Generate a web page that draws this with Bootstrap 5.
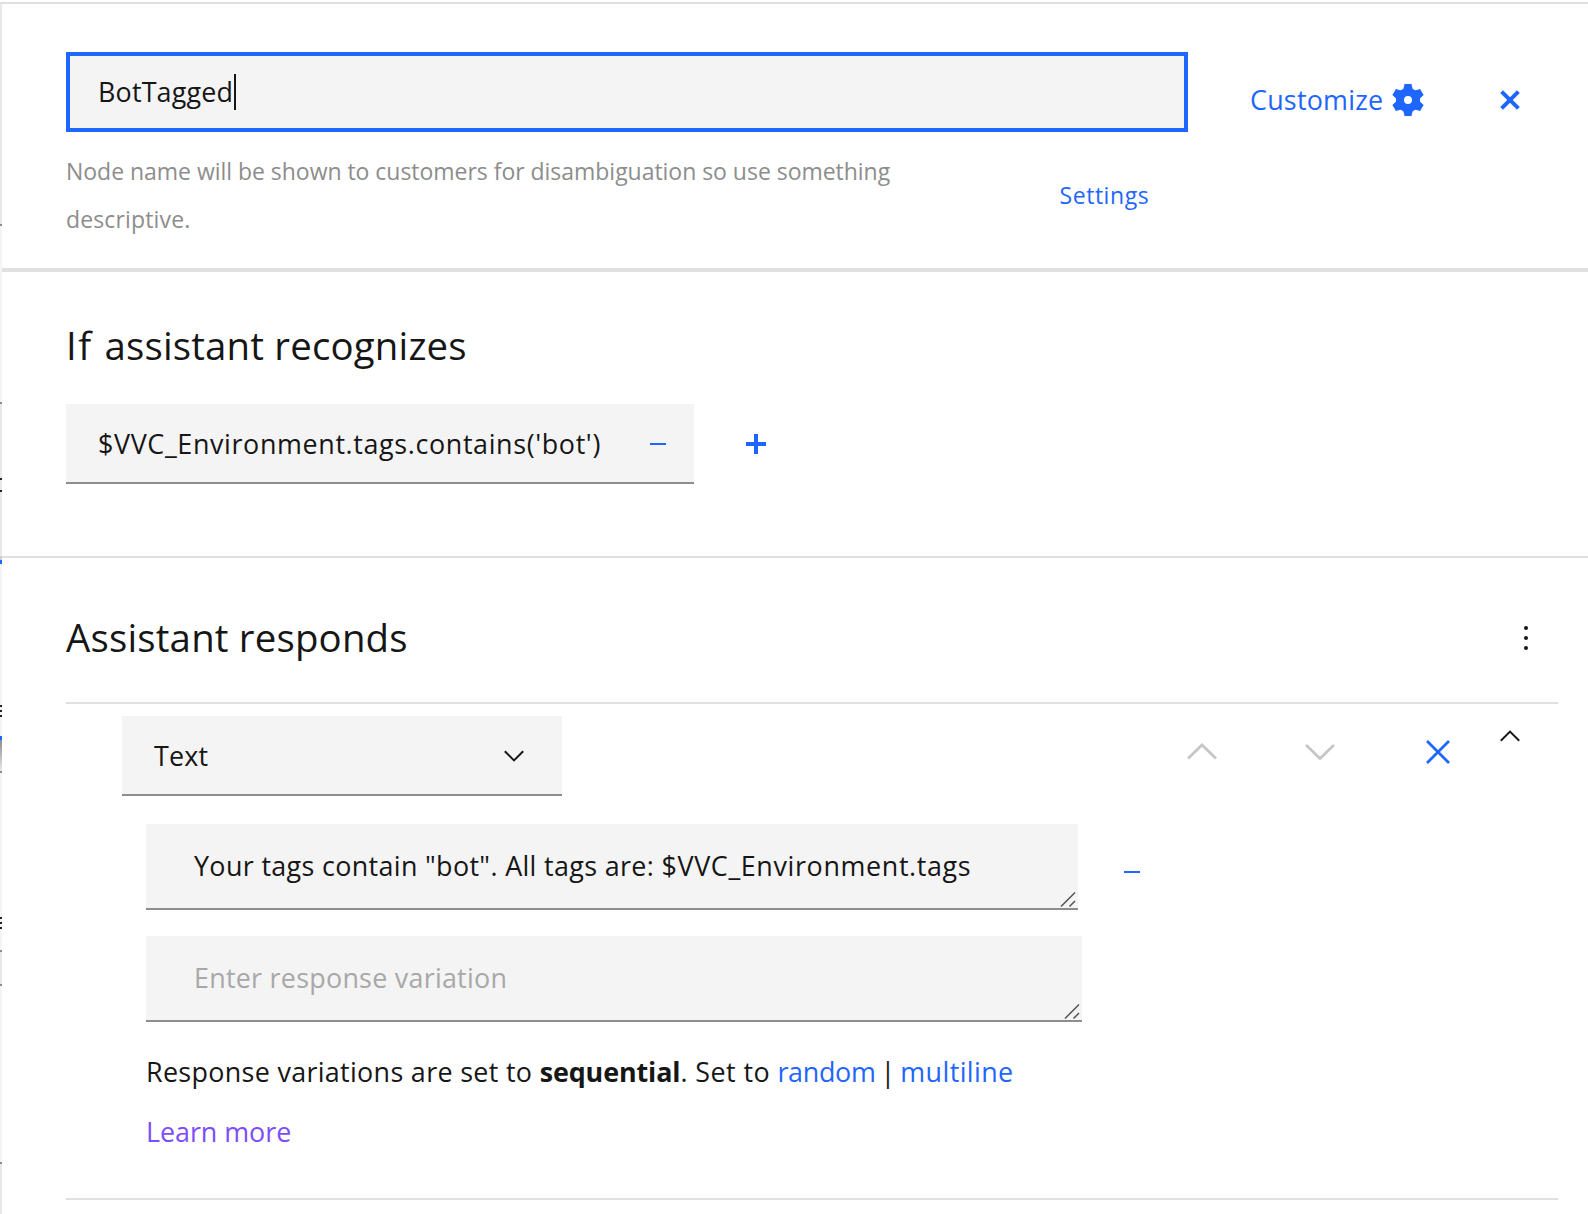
<!DOCTYPE html>
<html lang="en">
<head>
<meta charset="utf-8">
<meta name="viewport" content="width=device-width, initial-scale=1">
<title>Dialog node editor</title>
<link href="https://cdn.jsdelivr.net/npm/bootstrap@5.3.0/dist/css/bootstrap.min.css" rel="stylesheet">
<script src="https://cdn.jsdelivr.net/npm/bootstrap@5.3.0/dist/js/bootstrap.bundle.min.js" defer></script>
<style>
  body { font-family: "Open Sans", "Noto Sans", sans-serif; color: #161616; font-size: 26.9px; background: #fff; height: 1214px; overflow: hidden; }
  a { text-decoration: none; color: #1f66ff; }
  svg { display: block; flex: none; overflow: visible; }
  .editor { height: 1214px; padding-top: 2px; }
  .editor-body { border-top: 2px solid #e0e0e0; }
  /* sliver of the dialog tree behind the panel */
  .tree-edge { width: 2px; flex: none; position: relative; overflow: hidden;
    background: linear-gradient(#e8e8e8 220px, #8d8d8d 220px 222px, #f4f4f4 222px 398px, #8d8d8d 398px 400px,
      #e8e8e8 400px 552px, #d0d0d0 552px 556px, #1f66ff 556px 560px, #f4f4f4 560px 732px, #1f66ff 732px 736px,
      #8d8d8d 736px, #e8e8e8 767px, #8d8d8d 767px 769px, #f4f4f4 769px 946px, #8d8d8d 946px 948px,
      #e8e8e8 948px 980px, #8d8d8d 980px 982px, #f4f4f4 982px 1158px, #8d8d8d 1158px 1160px, #e8e8e8 1160px); }
  .tree-edge i { position: absolute; left: 0; width: 2px; height: 2px; background: #222; }
  .edge-1 { top: 474px; } .edge-2 { top: 486px; }
  .edge-3 { top: 701px; } .edge-4 { top: 706px; } .edge-5 { top: 711px; }
  .edge-6 { top: 913px; } .edge-7 { top: 918px; } .edge-8 { top: 923px; }
  .sec-head { height: 268px; border-bottom: 4px solid #e0e0e0; padding: 48px 0 0 64px; }
  .name-col { width: 1122px; flex: none; }
  .name-box { height: 80px; border: 4px solid #1f66ff; background: #f4f4f4; padding-left: 28px; letter-spacing: .17px; }
  .caret { width: 2px; height: 36px; background: #161616; margin-left: 1px; }
  .help-row { margin-top: 15px; font-size: 23px; line-height: 48px; }
  .help-copy { width: 880px; color: #8d8d8d; letter-spacing: -.03px; }
  .help-tail { letter-spacing: .14px; }
  .link-settings { margin-left: 113.5px; letter-spacing: .55px; }
  .head-tools { height: 96px; padding-left: 62px; }
  .link-custom { letter-spacing: .22px; }
  .icon-close { margin-left: 75px; }
  .h-title { font-size: 38.4px; line-height: 52px; font-weight: 400; margin: 0; letter-spacing: .18px; }
  .h-first { letter-spacing: 1.6px; }
  .sec-if { height: 286px; border-bottom: 2px solid #e0e0e0; padding: 47px 0 0 64px; }
  .field-box { background: #f4f4f4; border-bottom: 2px solid #8d8d8d; white-space: nowrap; }
  .cond { width: 628px; height: 80px; margin-top: 33px; padding: 2px 28px 0 32px; letter-spacing: .63px; }
  .icon-plus { margin: 63px 0 0 52px; }
  .sec-resp { padding: 53px 30px 0 64px; }
  .resp-top { padding-right: 28px; height: 93px; border-bottom: 2px solid #e0e0e0; }
  .icon-dots { margin-top: 15px; }
  .resp-body { height: 496px; border-bottom: 2px solid #e0e0e0; padding: 12px 38px 0 56px; }
  .type-select { width: 440px; height: 80px; padding: 2px 37px 0 32px; letter-spacing: .2px; }
  .row-tools { padding-top: 14px; }
  .icon-up { margin-top: 13px; }
  .icon-down { margin: 14px 0 0 88px; }
  .icon-remove { margin: 10px 0 0 91px; }
  .icon-fold { margin-left: 50px; }
  .variants { padding: 28px 0 0 24px; }
  .area { width: 932px; height: 86px; padding-left: 48px; position: relative; letter-spacing: .34px; }
  .area-var { letter-spacing: .63px; }
  .area-next { width: 936px; margin-top: 26px; color: #a8a8a8; letter-spacing: .25px; }
  .icon-minus { margin: 10px 0 0 46px; }
  .grip { position: absolute; right: 1px; bottom: .5px; }
  .resp-note { margin-top: 20px; line-height: 60px; white-space: nowrap; letter-spacing: .32px; }
  .note-mode { letter-spacing: -.1px; }
  .note-set { letter-spacing: .45px; }
  .note-modes { word-spacing: -2px; letter-spacing: 0; }
  .note-random { letter-spacing: -.3px; }
  .note-multi { letter-spacing: .4px; }
  .link-learn { color: #7c4dff; letter-spacing: -.05px; }
</style>
</head>
<body>
<div class="editor d-flex flex-column">
 <div class="editor-body d-flex flex-grow-1">
  <div class="tree-edge">
    <i class="edge-1"></i><i class="edge-2"></i><i class="edge-3"></i><i class="edge-4"></i>
    <i class="edge-5"></i><i class="edge-6"></i><i class="edge-7"></i><i class="edge-8"></i>
  </div>
  <main class="flex-grow-1">
    <header class="sec-head d-flex align-items-start">
      <div class="name-col">
        <div class="name-box d-flex align-items-center"><span>BotTagged</span><span class="caret"></span></div>
        <div class="help-row d-flex align-items-center">
          <div class="help-copy">Node name will be shown to customers for disambiguation so use something<br><span class="help-tail">descriptive.</span></div>
          <a href="#" class="link-settings">Settings</a>
        </div>
      </div>
      <div class="head-tools d-flex align-items-center">
        <a href="#" class="link-custom d-flex align-items-center"><span>Customize</span>
          <svg class="ms-2" width="34" height="34" viewBox="-17 -17 34 34" fill="#1f66ff">
            <circle r="8" fill="none" stroke="#1f66ff" stroke-width="8"/>
            <path id="tooth" d="M-3.500-16H3.500L4.500-11.500 6.500-9H-6.500L-4.500-11.500Z"/>
            <use href="#tooth" transform="rotate(60)"/><use href="#tooth" transform="rotate(120)"/><use href="#tooth" transform="rotate(180)"/><use href="#tooth" transform="rotate(240)"/><use href="#tooth" transform="rotate(300)"/>
          </svg>
        </a>
        <svg class="icon-close" width="20" height="20" viewBox="-10 -10 20 20" stroke="#1f66ff" stroke-width="4"><path d="M-8.4-8.4 8.4 8.4M8.4-8.4-8.4 8.4"/></svg>
      </div>
    </header>

    <section class="sec-if">
      <h2 class="h-title"><span class="h-first">If </span>assistant recognizes</h2>
      <div class="d-flex align-items-start">
        <div class="field-box cond d-flex align-items-center justify-content-between">
          <span>$VVC_Environment.tags.contains('bot')</span>
          <svg width="16" height="2"><path d="M0 0h16v2H0z" fill="#1f66ff"/></svg>
        </div>
        <svg class="icon-plus" width="20" height="20"><path d="M8 0h4v8h8v4h-8v8H8v-8H0V8h8z" fill="#1f66ff"/></svg>
      </div>
    </section>

    <section class="sec-resp">
      <div class="resp-top d-flex align-items-start justify-content-between">
        <h2 class="h-title">Assistant responds</h2>
        <svg class="icon-dots" width="8" height="24" fill="#161616"><circle cx="4" cy="2" r="2"/><circle cx="4" cy="12" r="2"/><circle cx="4" cy="22" r="2"/></svg>
      </div>
      <div class="resp-body">
        <div class="d-flex justify-content-between">
          <div class="field-box type-select d-flex align-items-center justify-content-between">
            <span>Text</span>
            <svg width="21" height="12" fill="none" stroke="#161616" stroke-width="2"><path d="M.8 1.2l9.2 9.2L19.200 1.2"/></svg>
          </div>
          <div class="row-tools d-flex align-items-start">
            <svg class="icon-up" width="30" height="16" fill="none" stroke="#c6c6c6" stroke-width="2.8"><path d="M1 15.5 15 2l14 13.5"/></svg>
            <svg class="icon-down" width="30" height="16" fill="none" stroke="#c6c6c6" stroke-width="2.8"><path d="M1 1l14 13.5L29 1"/></svg>
            <svg class="icon-remove" width="24" height="24" stroke="#1f66ff" stroke-width="2.8"><path d="M1 1l22 22M23 1 1 23"/></svg>
            <svg class="icon-fold" width="20" height="12" fill="none" stroke="#161616" stroke-width="2"><path d="M.8 10.7 10 1.6l9.2 9.1"/></svg>
          </div>
        </div>
        <div class="variants">
          <div class="d-flex align-items-center">
            <div class="field-box area d-flex align-items-center">
              <span>Your tags contain "bot". All tags are: <span class="area-var">$VVC_Environment.tags</span></span>
              <svg class="grip" width="17" height="17" stroke="#525252" stroke-width="1.5"><path d="M1 15.5 15 1.5M9.5 15.5 15 10"/></svg>
            </div>
            <svg class="icon-minus" width="16" height="2"><path d="M0 0h16v2H0z" fill="#1f66ff"/></svg>
          </div>
          <div class="field-box area area-next d-flex align-items-center">
            <span>Enter response variation</span>
            <svg class="grip" width="17" height="17" stroke="#525252" stroke-width="1.5"><path d="M1 15.5 15 1.5M9.5 15.5 15 10"/></svg>
          </div>
          <div class="resp-note">
            <div>Response variations are set to <b class="note-mode">sequential</b>. <span class="note-set">Set to</span> <span class="note-modes"><a href="#" class="note-random">random</a> | <a href="#" class="note-multi">multiline</a></span></div>
            <div><a href="#" class="link-learn">Learn more</a></div>
          </div>
        </div>
      </div>
    </section>
  </main>
 </div>
</div>
</body>
</html>
